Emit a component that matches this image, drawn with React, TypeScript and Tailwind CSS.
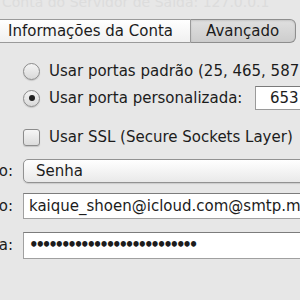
import React from "react";

const font = { fontFamily: '"DejaVu Sans", "Liberation Sans", sans-serif' };

function Radio({ checked }: { checked?: boolean }) {
  return (
    <div className="w-[17px] h-[17px] rounded-full border border-[#8c8c8c] bg-gradient-to-b from-[#f4f4f4] to-[#d9d9d9] shadow-[0_1px_1px_rgba(0,0,0,0.15)] flex items-center justify-center shrink-0">
      {checked && <div className="w-[6px] h-[6px] rounded-full bg-[#222]" />}
    </div>
  );
}

function Label({ text }: { text: string }) {
  return (
    <div className="w-[13px] overflow-hidden flex justify-end whitespace-nowrap text-[#1c1c1c] shrink-0">
      <span>{text}</span>
    </div>
  );
}

export default function App() {
  return (
    <div
      className="w-[300px] h-[300px] overflow-hidden bg-[#e7e7e7] text-[15px] text-[#1c1c1c] flex flex-col"
      style={font}
    >
      <div className="h-[19px] shrink-0 overflow-hidden">
        <div className="-mt-[7px] pl-[2px] whitespace-nowrap text-[#dcdcdc] text-[14px] leading-[18px]">
          Conta do Servidor de Saída: 127.0.0.1
        </div>
      </div>
      <div className="flex h-[24px] shrink-0">
        <div className="w-[190px] h-full border-y border-[#9a9a9a] bg-gradient-to-b from-[#ffffff] to-[#f0f0f0] pl-[8px] flex items-center whitespace-nowrap">
          Informações da Conta
        </div>
        <div className="w-[106px] h-full border border-l-[#9a9a9a] border-[#8e8e8e] rounded-r-[6px] bg-gradient-to-b from-[#e0e0e0] to-[#cdcdcd] flex items-center pl-[15px] whitespace-nowrap shadow-[inset_0_1px_2px_rgba(0,0,0,0.12)]">
          Avançado
        </div>
      </div>

      <div className="flex items-center h-[17px] shrink-0 mt-[20px] pl-[23px] gap-[9px] whitespace-nowrap">
        <Radio />
        <span>Usar portas padrão (25, 465, 587)</span>
      </div>

      <div className="flex items-center h-[24px] shrink-0 mt-[6px] pl-[23px] whitespace-nowrap">
        <Radio checked />
        <span className="ml-[9px] w-[206px] shrink-0">Usar porta personalizada:</span>
        <div className="h-[24px] w-[80px] shrink-0 bg-white border border-[#9a9a9a] border-t-[#7a7a7a] pl-[14px] flex items-center">
          653
        </div>
      </div>

      <div className="flex items-center h-[17px] shrink-0 mt-[19px] pl-[23px] gap-[9px] whitespace-nowrap">
        <div className="w-[17px] h-[17px] rounded-[3px] border border-[#8c8c8c] bg-gradient-to-b from-[#f6f6f6] to-[#dcdcdc] shadow-[0_1px_1px_rgba(0,0,0,0.15)] shrink-0" />
        <span>Usar SSL (Secure Sockets Layer)</span>
      </div>

      <div className="flex items-center h-[24px] shrink-0 mt-[13px] gap-[10px] whitespace-nowrap">
        <Label text="Autenticação:" />
        <div className="h-[24px] w-[290px] shrink-0 rounded-l-[5px] border border-[#929292] bg-gradient-to-b from-[#ffffff] to-[#e9e9e9] shadow-[0_1px_1px_rgba(0,0,0,0.12)] pl-[12px] flex items-center">
          Senha
        </div>
      </div>

      <div className="flex items-center h-[26px] shrink-0 mt-[10px] gap-[10px] whitespace-nowrap">
        <Label text="Nome de Usuário:" />
        <div className="h-[26px] w-[290px] shrink-0 bg-white border border-[#a0a0a0] border-t-[#7c7c7c] pl-[5px] flex items-center overflow-hidden">
          kaique_shoen@icloud.com@smtp.mail.me.com
        </div>
      </div>

      <div className="flex items-center h-[27px] shrink-0 mt-[13px] gap-[10px] whitespace-nowrap">
        <Label text="Senha:" />
        <div className="h-[27px] w-[290px] shrink-0 bg-white border border-[#a0a0a0] border-t-[#7c7c7c] pl-[5px] flex items-center overflow-hidden font-bold tracking-[-3.2px]">
          ••••••••••••••••••••••••••
        </div>
      </div>
    </div>
  );
}
